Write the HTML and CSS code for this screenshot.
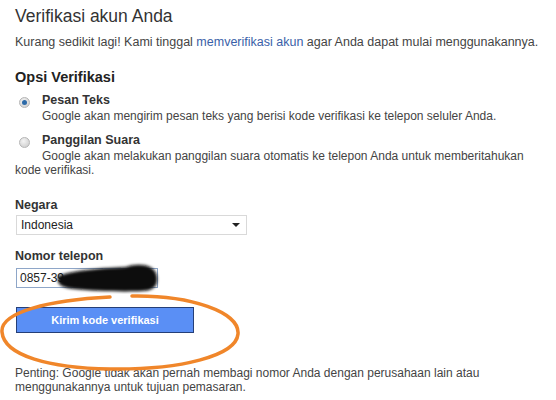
FILE: index.html
```html
<!DOCTYPE html>
<html lang="en">
<head>
    <meta charset="UTF-8">
    <title>Verifikasi akun Anda</title>
    <link rel="stylesheet" href="styles.css">
</head>
<body>
    <h1 class="page-title">Verifikasi akun Anda</h1>
    <p class="intro">Kurang sedikit lagi! Kami tinggal <a href="#">memverifikasi akun</a> agar Anda dapat mulai menggunakannya.</p>

    <h2 class="section-title">Opsi Verifikasi</h2>

    <div class="option">
        <span class="radio checked"></span>
        <div class="option-body">
            <div class="option-name">Pesan Teks</div>
            <div class="option-desc">Google akan mengirim pesan teks yang berisi kode verifikasi ke telepon seluler Anda.</div>
        </div>
    </div>

    <div class="option option-wrap">
        <span class="radio"></span>
        <div class="option-body">
            <div class="option-name">Panggilan Suara</div>
            <div class="option-desc">Google akan melakukan panggilan suara otomatis ke telepon Anda untuk memberitahukan</div>
        </div>
    </div>
    <div class="option-cont">kode verifikasi.</div>

    <div class="field">
        <label class="field-label">Negara</label>
        <div class="select">
            <span>Indonesia</span>
            <span class="caret"></span>
        </div>
    </div>

    <div class="field">
        <label class="field-label">Nomor telepon</label>
        <div class="phone">
            <div class="input">0857-39</div>
            <!-- scribble that hides the number -->
            <svg class="scribble" width="112" height="32" viewBox="0 0 112 32">
                <defs>
                    <filter id="blur" x="-20%" y="-40%" width="140%" height="180%">
                        <feGaussianBlur stdDeviation="1.6"/>
                    </filter>
                </defs>
                <path d="M4 14 C20 8 50 6 72 5 C80 2 90 2 96 5 C102 8 104 14 103 20 C102 26 96 29 88 29 C70 30 40 29 20 27 C10 26 4 23 4 19 Z" fill="#0a0a0a" filter="url(#blur)"/>
            </svg>
        </div>
    </div>

    <div class="submit-wrap">
        <button class="btn-submit">Kirim kode verifikasi</button>
        <svg class="circle" width="250" height="82" viewBox="0 0 250 82">
            <path d="M132 4 C190 3 240 20 238 42 C236 64 180 78 110 77 C50 76 4 64 2 40 C0 20 50 8 110 5" fill="none" stroke="#f0862a" stroke-width="3.5" stroke-linecap="round"/>
        </svg>
    </div>

    <p class="note">Penting: Google tidak akan pernah membagi nomor Anda dengan perusahaan lain atau menggunakannya untuk tujuan pemasaran.</p>
</body>
</html>
```

FILE: styles.css
```css
body {
    font-family: "Liberation Sans", Arial, sans-serif;
    margin: 0;
    padding: 3px 15px 0 15px;
    background: #fff;
    color: #444;
    font-size: 12px;
}

.page-title {
    font-size: 17.5px;
    font-weight: normal;
    color: #333;
    margin: 0;
    line-height: 26px;
}

.intro {
    margin: 5px 0 0 0;
    line-height: 16px;
    font-size: 12.5px;
}

.intro a {
    color: #3a5fa8;
    text-decoration: none;
}

.section-title {
    font-size: 14.5px;
    font-weight: bold;
    color: #222;
    margin: 18px 0 0 0;
    line-height: 18px;
}

.option {
    display: flex;
    align-items: flex-start;
    margin-top: 6px;
}

.option-wrap {
    margin-top: 8px;
}

.radio {
    width: 9px;
    height: 9px;
    border-radius: 50%;
    background: radial-gradient(circle at 40% 35%, #f4f4f4, #c8c8c8);
    border: 1px solid #b5b5b5;
    margin: 5px 0 0 4px;
    position: relative;
    flex-shrink: 0;
}

.radio.checked::after {
    content: "";
    position: absolute;
    left: 2px;
    top: 2px;
    width: 5px;
    height: 5px;
    border-radius: 50%;
    background: #2c6aa8;
}

.option-body {
    margin-left: 12px;
}

.option-name {
    font-weight: bold;
    font-size: 12.5px;
    color: #333;
    line-height: 16px;
}

.option-desc {
    line-height: 16px;
    white-space: nowrap;
}

.option-cont {
    line-height: 14px;
    margin-top: -1px;
}

.field {
    margin-top: 20px;
}

.field + .field {
    margin-top: 13px;
}

.field-label {
    display: block;
    font-weight: bold;
    font-size: 12.5px;
    color: #333;
    line-height: 16px;
}

.select {
    width: 231px;
    height: 20px;
    border: 1px solid #d9d9d9;
    margin: 2px 0 0 1px;
    display: flex;
    align-items: center;
    justify-content: space-between;
    padding: 0 4px 0 4px;
    box-sizing: border-box;
    color: #222;
}

.caret {
    width: 0;
    height: 0;
    border-left: 4px solid transparent;
    border-right: 4px solid transparent;
    border-top: 4px solid #222;
    margin-right: 2px;
}

.phone {
    position: relative;
    margin: 4px 0 0 1px;
}

.input {
    width: 142px;
    height: 20px;
    border: 1px solid #8ea6c8;
    box-sizing: border-box;
    padding: 0 3px;
    line-height: 18px;
    color: #222;
}

.scribble {
    position: absolute;
    left: 38px;
    top: -6px;
}

.submit-wrap {
    position: relative;
    margin: 19px 0 0 1px;
}

.btn-submit {
    width: 178px;
    height: 26px;
    background: #5a8ff5;
    border: 1px solid #253f78;
    color: #fff;
    font-family: inherit;
    font-weight: bold;
    font-size: 11px;
    padding: 0;
    display: block;
}

.circle {
    position: absolute;
    left: -16px;
    top: -15px;
    pointer-events: none;
}

.note {
    margin: 33px 0 0 0;
    line-height: 14px;
    width: 475px;
}
```
